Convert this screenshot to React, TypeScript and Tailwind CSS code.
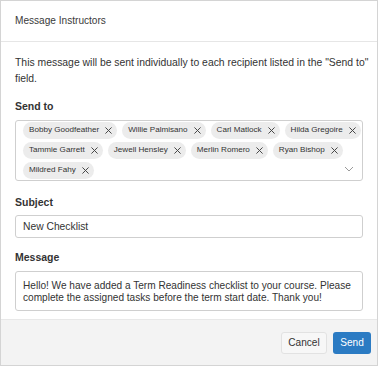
import React from "react";

const recipients = [
  "Bobby Goodfeather",
  "Willie Palmisano",
  "Carl Matlock",
  "Hilda Gregoire",
  "Tammie Garrett",
  "Jewell Hensley",
  "Merlin Romero",
  "Ryan Bishop",
  "Mildred Fahy",
];

function XIcon() {
  return (
    <svg width="7" height="7" viewBox="0 0 10 10" className="shrink-0">
      <path d="M1 1L9 9M9 1L1 9" stroke="#444" strokeWidth="1.4" strokeLinecap="round" />
    </svg>
  );
}

function Chip({ name }: { name: string }) {
  return (
    <div className="flex items-center h-[17px] pl-[6px] pr-[5px] gap-[6px] rounded-full bg-[#ececec] text-[8.1px] text-[#333]">
      <span>{name}</span>
      <XIcon />
    </div>
  );
}

export default function App() {
  return (
    <div
      className="w-[378px] h-[366px] border border-[#d4d4d4] bg-white flex flex-col text-[#333]"
      style={{ fontFamily: '"Liberation Sans", Arial, sans-serif' }}
    >
      <div className="h-[41px] shrink-0 flex items-center px-[14px] border-b border-[#e6e6e6] text-[10.1px] text-[#3a3a3a]">
        Message Instructors
      </div>

      <div className="flex-1 px-[14px] pt-[13px]">
        <p className="text-[10.4px] leading-[16px] mr-[-8px]">
          This message will be sent individually to each recipient listed in the "Send to" field.
        </p>

        <div className="mt-[12px] text-[10.5px] leading-[14px] font-bold">Send to</div>
        <div className="mt-[7px] relative border border-[#cfcfcf] rounded-[3px] pl-[7px] pr-0 py-[1px] flex flex-wrap gap-x-[5px] gap-y-[3px]">
          {recipients.map((r) => (
            <Chip key={r} name={r} />
          ))}
          <svg
            width="10"
            height="6"
            viewBox="0 0 10 6"
            className="absolute right-[8px] bottom-[8px]"
          >
            <path d="M1 1L5 5L9 1" stroke="#9a9a9a" strokeWidth="1" fill="none" />
          </svg>
        </div>

        <div className="mt-[14px] text-[10.5px] leading-[14px] font-bold">Subject</div>
        <div className="mt-[6px] h-[23px] border border-[#cfcfcf] rounded-[3px] flex items-center px-[7px] text-[10.3px]">
          New Checklist
        </div>

        <div className="mt-[12px] text-[10.5px] leading-[14px] font-bold">Message</div>
        <div className="mt-[7px] h-[40px] border border-[#cfcfcf] rounded-[3px] pl-[7px] pr-[2px] pt-[8px] text-[10.1px] leading-[12px]">
          Hello! We have added a Term Readiness checklist to your course. Please complete the assigned tasks before the term start date. Thank you!
        </div>
      </div>

      <div className="h-[46px] shrink-0 bg-[#f3f3f3] border-t border-[#e8e8e8] flex items-center justify-end gap-[6px] pr-[6px]">
        <button className="h-[22px] w-[46px] rounded-[3px] bg-[#f7f7f7] border border-[#e2e2e2] text-[10.1px] text-[#333]">
          Cancel
        </button>
        <button className="h-[22px] w-[38px] rounded-[3px] bg-[#2b7bc3] text-[10.1px] text-white">
          Send
        </button>
      </div>
    </div>
  );
}
